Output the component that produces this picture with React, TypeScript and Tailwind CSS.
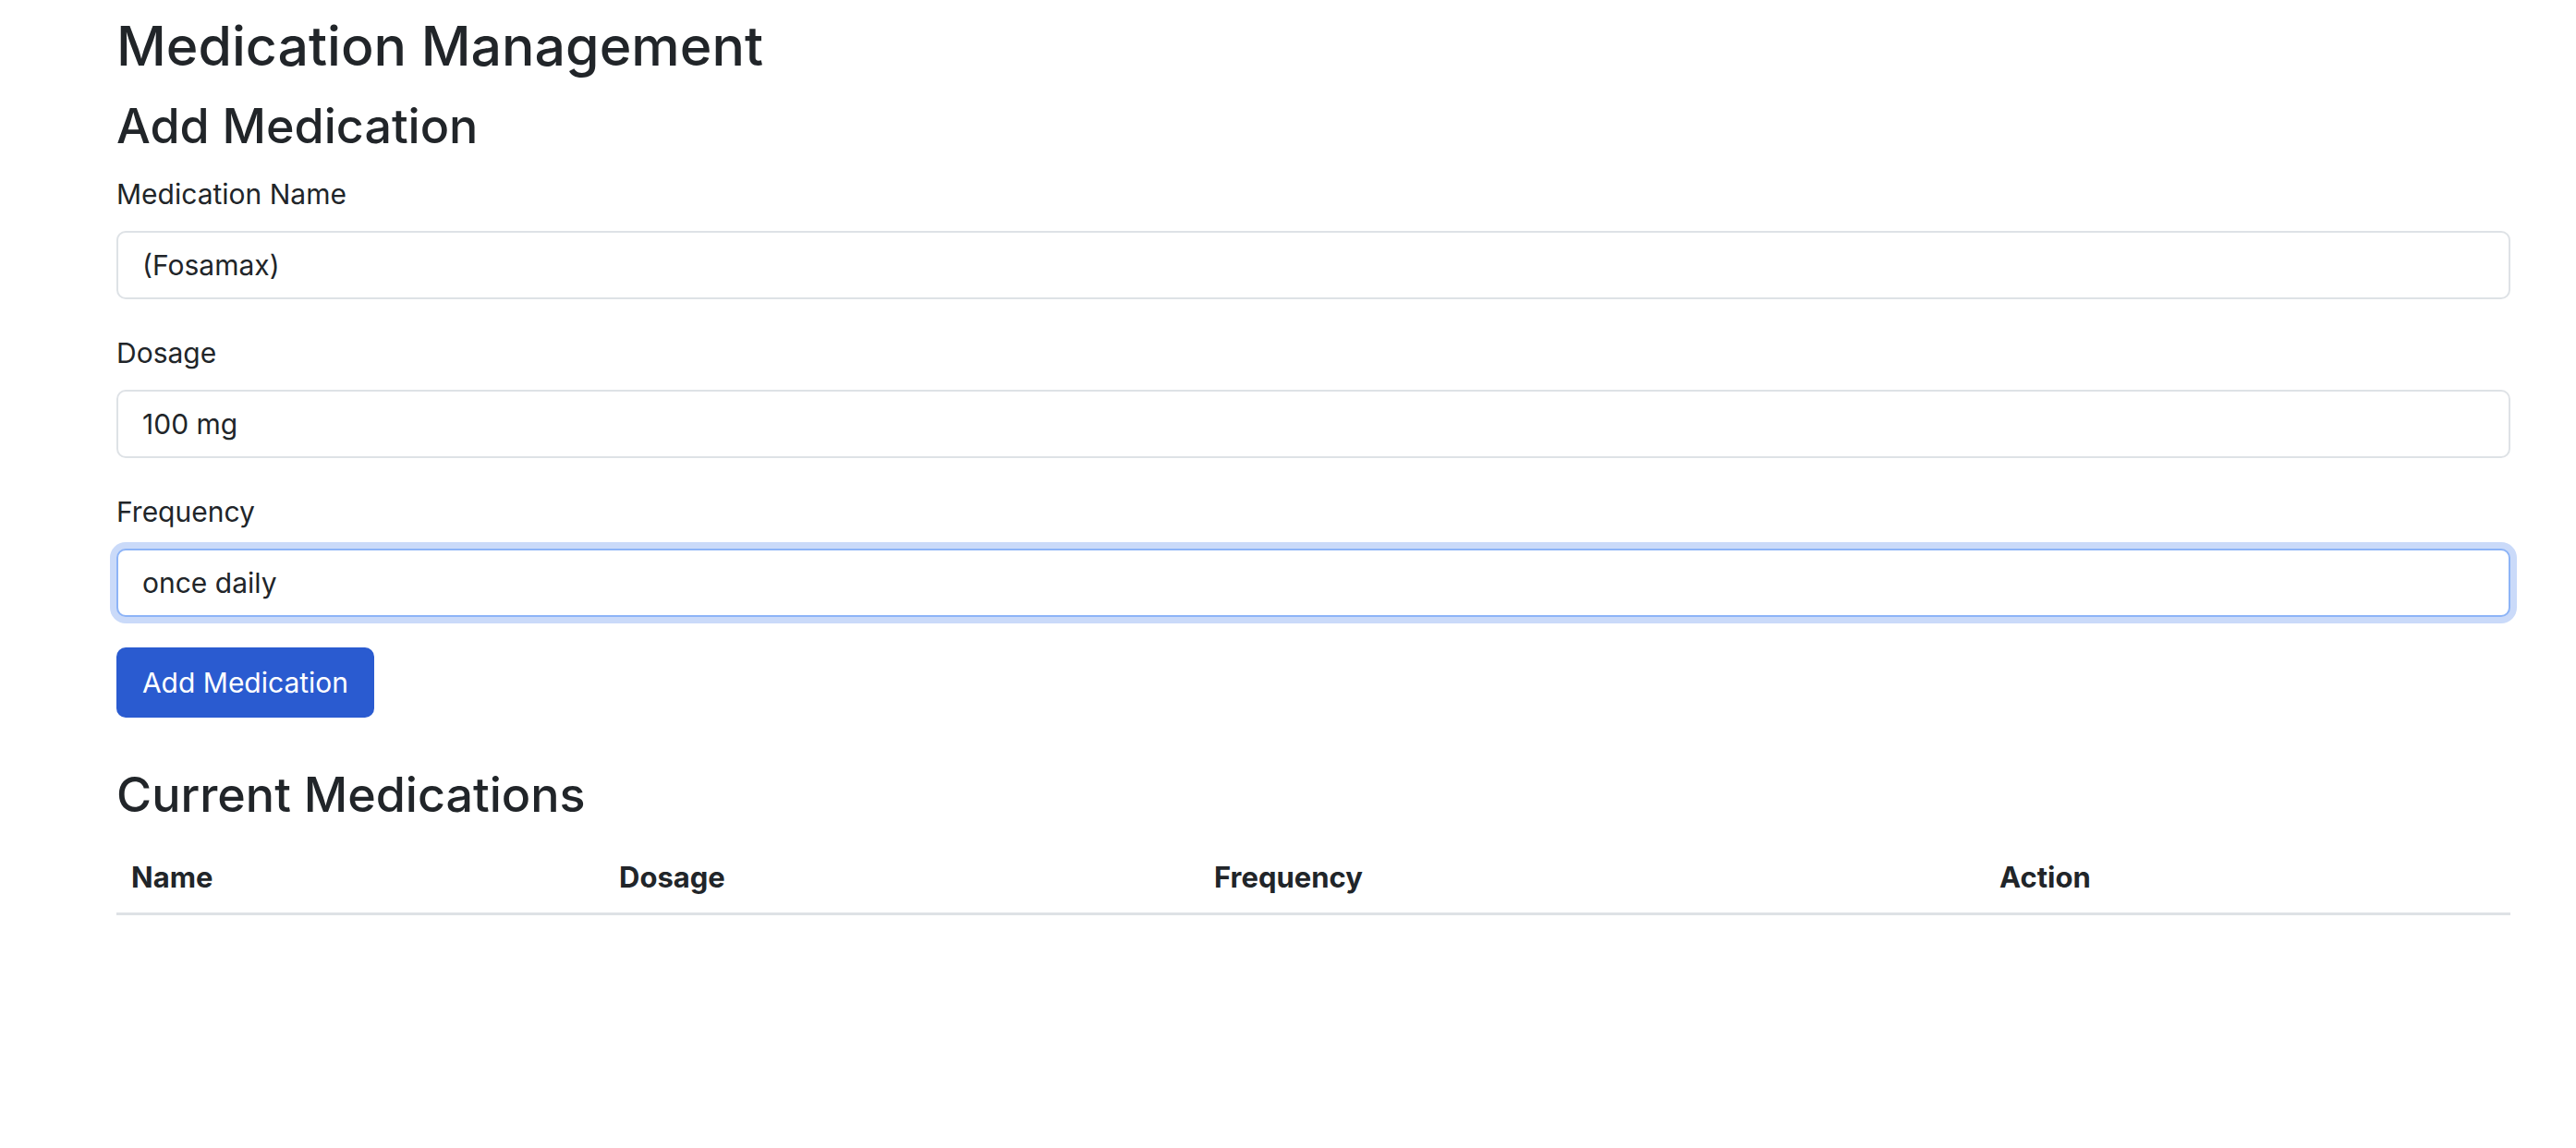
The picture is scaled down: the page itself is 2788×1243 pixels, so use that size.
import React, { useState } from 'react';

const font = { fontFamily: 'Inter, "Noto Sans", sans-serif' };

const Field: React.FC<{
  label: string;
  value: string;
  focused?: boolean;
  onChange: (v: string) => void;
}> = ({ label, value, focused, onChange }) => (
  <div className="flex flex-col">
    <label className="text-[30px] leading-[32px] text-[#212529]">{label}</label>
    <input
      value={value}
      autoFocus={focused}
      onChange={(e) => onChange(e.target.value)}
      className={`mt-[24px] h-[74px] w-full rounded-[10px] border-2 bg-white px-[26px] text-[30px] text-[#212529] caret-[#212529] outline-none ${
        focused ? 'border-[#8db4f7] ring-[7px] ring-[#cadaf9]' : 'border-[#dee2e6]'
      }`}
    />
  </div>
);

export default function App() {
  const [name, setName] = useState('(Fosamax)');
  const [dosage, setDosage] = useState('100 mg');
  const [freq, setFreq] = useState('once daily');

  return (
    <div className="min-h-screen bg-white" style={font}>
      <div className="ml-[126px] w-[2591px] pt-[11px] text-[#212529]">
        <h1 className="text-[59px] font-medium leading-[77px]">Medication Management</h1>
        <h2 className="mt-[18px] text-[52px] font-medium leading-[62px]">Add Medication</h2>

        <div className="mt-[26px] flex flex-col gap-[42px]">
          <Field label="Medication Name" value={name} onChange={setName} />
          <Field label="Dosage" value={dosage} onChange={setDosage} />
          <Field label="Frequency" value={freq} focused onChange={setFreq} />
        </div>

        <button className="mt-[33px] h-[76px] w-[279px] rounded-[10px] bg-[#2a5bd0] text-[30px] text-white">
          Add Medication
        </button>

        <h2 className="mt-[53px] text-[52px] font-medium leading-[62px]">Current Medications</h2>

        <table className="mt-[31px] w-full border-collapse text-left">
          <thead>
            <tr className="border-b-[3px] border-[#dee2e6]">
              <th className="w-[531px] px-[16px] pb-[19px] pt-[8px] text-[31px] font-bold leading-[38px]">Name</th>
              <th className="w-[644px] px-[13px] pb-[19px] pt-[8px] text-[31px] font-bold leading-[38px]">Dosage</th>
              <th className="w-[850px] px-[13px] pb-[19px] pt-[8px] text-[31px] font-bold leading-[38px]">Frequency</th>
              <th className="px-[13px] pb-[19px] pt-[8px] text-[31px] font-bold leading-[38px]">Action</th>
            </tr>
          </thead>
          <tbody />
        </table>
      </div>
    </div>
  );
}
